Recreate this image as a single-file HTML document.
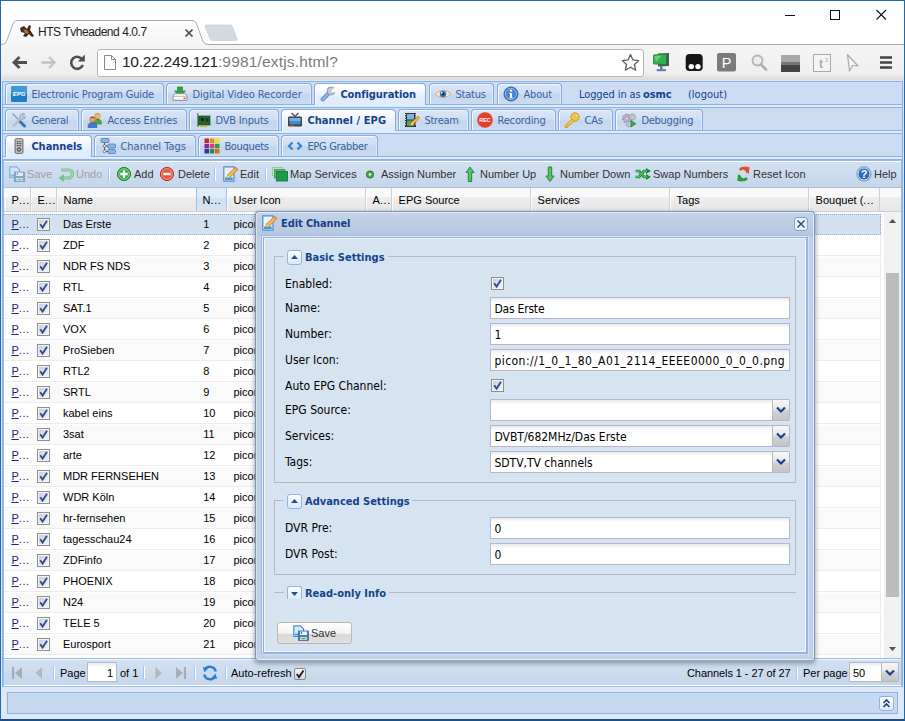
<!DOCTYPE html><html><head><meta charset="utf-8"><title>HTS Tvheadend 4.0.7</title><style>
*{box-sizing:border-box;margin:0;padding:0}
html,body{width:905px;height:721px;overflow:hidden;background:#fff}
body{position:relative;font-family:"Liberation Sans",sans-serif;font-size:11px;color:#000}
.a{position:absolute;white-space:nowrap}
.tah{font-family:"DejaVu Sans Condensed","Liberation Sans",sans-serif}
/* chrome */
#win{left:0;top:0;width:905px;height:721px;border:1px solid #1c6bb5;border-bottom:2px solid #16508c;z-index:50;pointer-events:none}
#tbar{left:1px;top:45px;width:903px;height:35px;background:linear-gradient(#f5f5f5 0,#efefef 28px,#e4e4e4 32px,#dcdcdc 35px)}
#url{left:97px;top:49px;width:547px;height:28px;background:#fff;border:1px solid #b4b4b4;border-radius:3px}
/* ext */
#vp{left:1px;top:80px;width:903px;height:639px;background:#dfe8f6}
.strip{left:3px;width:899px;height:23px;background:#cbdcf3;border-bottom:1px solid #8db2e3}
.spacer{left:3px;width:899px;height:3px;background:#deecfd;border-bottom:1px solid #8db2e3}
.tab{top:0;height:21px;border:1px solid #84aadf;border-bottom:0;border-radius:4px 4px 0 0;background:linear-gradient(#d9e6f7 0%,#cfdff3 45%,#c3d6ec 55%,#cbdcf1 100%);box-shadow:inset 1px 1px 0 #f4f8fd, inset -1px 0 0 #e0ebf9;color:#38629e;font-family:"DejaVu Sans Condensed","Liberation Sans",sans-serif;font-size:11px;line-height:13px}
.tab.act{height:22px;background:linear-gradient(#ffffff 0%,#f6f9fe 30%,#e4eefa 62%,#deecfd 100%);color:#15428b;font-weight:bold;box-shadow:inset 1px 1px 0 #fff}
.tab span{position:absolute;top:4px;left:25.4px}
.tab svg{position:absolute;left:5px;top:2px;width:16px;height:16px}
.tbtn{top:170px;font-size:11px;line-height:13px;color:#333}
.dis{color:#a0a0a0}
.sep{width:2px;height:14px;border-left:1px solid #98c8ff;border-right:1px solid #fff;top:167px}
.hd{top:188px;height:23px;border-right:1px solid #d0d0d0;border-left:1px solid #fbfbfb;font-size:11px;line-height:15px;padding:5px 3px 3px 5.6px;overflow:hidden}
.hd i{font-style:normal;letter-spacing:.6px}
.row{left:3px;width:877px;height:21px;border-top:1px solid #fff;border-bottom:1px solid #ededed;border-right:1px solid #ededed;font-size:11px;line-height:13px}
.row.alt{background:#fafafa}
.row.sel{background:#d4e1f0;border-top:1px dotted #8ea8dc;border-bottom:1px dotted #8ea8dc;border-right:1px dotted #8ea8dc}
.row span{position:absolute;top:3px}
.row .p{left:7.4px;color:#15257b}
.row .p u{text-decoration:underline}
.row .p i{font-style:normal;letter-spacing:.6px}
.row .n{left:59px}
.row .k{left:199.2px}
.row .u{left:229.5px}
.cb{position:absolute;width:13px;height:13px;border:1px solid #8e8f8f;background:linear-gradient(135deg,#c6cbd3,#e6e8ea 65%,#f6f6f6);box-shadow:inset 0 0 0 1px #f4f4f4}
.cb svg{position:absolute;left:0;top:0;width:11px;height:11px}
.row .cb{left:33px;top:3px}
.fld{height:22px;border:1px solid #b5b8c8;background:#fff linear-gradient(#e6e9ee 0,#fff 4px) no-repeat;background-size:100% 5px;font-family:"DejaVu Sans Condensed","Liberation Sans",sans-serif;font-size:12px;line-height:14px;padding:4px 0 0 3.4px;overflow:hidden}
.lbl{left:285px;font-family:"DejaVu Sans Condensed","Liberation Sans",sans-serif;font-size:12px;line-height:14px;color:#000}
.trig{width:17px;height:22px;border:1px solid #b5b8c8;border-left:0;background:linear-gradient(#f7f7f7 0%,#e9e9e9 45%,#d2d2d2 55%,#c4c4c4 100%);border-radius:0 2px 2px 0}
.trig svg{position:absolute;left:3px;top:6px;width:10px;height:8px}
.fs{left:274px;width:522px;border:1px solid #b5b8c8}
.leg{font-family:"DejaVu Sans Condensed","Liberation Sans",sans-serif;font-size:11px;font-weight:bold;color:#15428b;line-height:13px}
.tool{width:15px;height:15px;border:1px solid #90b3e4;border-radius:3px;background:linear-gradient(#fdfeff,#dce9f8)}
</style></head><body>
<div class="a" id="tbar"></div>
<svg class="a" style="left:0;top:17px" width="260" height="30" viewBox="0 0 260 30"><defs><linearGradient id="tg" x1="0" y1="0" x2="0" y2="1"><stop offset="0" stop-color="#fdfdfd"/><stop offset="1" stop-color="#f4f4f4"/></linearGradient></defs><path d="M1 27.5 C5 27.5 6 25.5 7.200 22.500 L12.500 8 C13.600 4.800 14.800 3.500 17.500 3.500 L192 3.500 C194.500 3.500 196 4.800 197 8 L202.300 22.500 C203.500 25.500 204.500 27.500 208.500 27.500 L208.500 30 L1 30 Z" fill="url(#tg)" stroke="#a8a8a8" stroke-width="1"/><rect x="0" y="28" width="260" height="3" fill="#f4f4f4"/><path d="M208.500 27.500 L260 27.500" stroke="#a8a8a8" stroke-width="1" fill="none"/><path d="M206.5 8 L230 8 C231.500 8 232 8.500 232.600 10 L237 21.500 C237.600 23 237 23.500 235.500 23.500 L212.500 23.500 C211 23.500 210.500 23 209.900 21.500 L205.300 10 C204.700 8.500 205 8 206.500 8 Z" fill="#d2d9df" stroke="#c3c9ce" stroke-width=".6"/></svg>
<div class="a" style="left:233px;top:44px;width:671px;height:1px;background:#a8a8a8"></div>
<svg class="a" style="left:19px;top:24px" width="16" height="16" viewBox="0 0 16 16"><path d="M1 4 L5 2 L8 5 L10 1 L12 2 L11 6 L15 12 L13 13 L10 10 L7 13 L4 12 L6 9 L2 8 Z" fill="#3a2a22"/><path d="M4 5 L8 6 L10 9 L7 10 Z" fill="#c8682a"/></svg>
<div class="a" style="left:38px;top:25px;font-size:12px;line-height:14px;color:#222;letter-spacing:-0.45px">HTS Tvheadend 4.0.7</div>
<svg class="a" style="left:184px;top:28px" width="10" height="10" viewBox="0 0 10 10"><path d="M1.500 1.500 L8.500 8.500 M8.500 1.500 L1.500 8.500" stroke="#4a4a4a" stroke-width="1.7"/></svg>
<svg class="a" style="left:780px;top:5px" width="120" height="22" viewBox="0 0 120 22"><path d="M5 10.500 H15" stroke="#111" stroke-width="1"/><rect x="50.500" y="5.500" width="9" height="9" fill="none" stroke="#111" stroke-width="1"/><path d="M96.500 5 L106 14.500 M106 5 L96.500 14.500" stroke="#111" stroke-width="1.100"/></svg>
<svg class="a" style="left:8px;top:50px" width="86" height="26" viewBox="0 0 86 26"><path d="M19 12.500 H6.500 M11.500 7 L6 12.500 L11.500 18" stroke="#505050" stroke-width="2.800" fill="none"/><path d="M33.500 12.500 H46 M41 7 L46.500 12.500 L41 18" stroke="#c2c2c2" stroke-width="2.400" fill="none"/><path d="M74.500 10 A6 6 0 1 0 74.800 15" stroke="#505050" stroke-width="2.600" fill="none"/><path d="M76.800 4.500 V11.500 H69.800 Z" fill="#505050"/></svg>
<div class="a" id="url"></div>
<svg class="a" style="left:104px;top:55px" width="12" height="15" viewBox="0 0 12 15"><path d="M0.500 0.500 H7.500 L11.500 4.500 V14.500 H0.500 Z" fill="#fff" stroke="#8a8a8a"/><path d="M7.500 0.500 V4.500 H11.500" fill="none" stroke="#8a8a8a"/></svg>
<div class="a" style="left:122px;top:53px;font-size:15.5px;line-height:18px;color:#222;letter-spacing:-0.25px">10.22.249.121<span style="color:#7a7a7a;letter-spacing:.17px">:9981/extjs.html?</span></div>
<svg class="a" style="left:621px;top:53px" width="19" height="19" viewBox="0 0 18 18"><path d="M9 1.500 L11.300 6.600 L16.800 7.200 L12.700 10.900 L13.900 16.300 L9 13.500 L4.100 16.300 L5.300 10.900 L1.200 7.200 L6.700 6.600 Z" fill="none" stroke="#5a5a5a" stroke-width="1.200" stroke-linejoin="round"/></svg>
<svg class="a" style="left:650px;top:51px" width="250" height="26" viewBox="0 0 250 26"><path d="M8 2.500 L19 2 L19 15 L8 15.500 Z" fill="#4a5a60"/><path d="M3.500 4 L16.500 3 L16.500 13.500 L3.500 13 Z" fill="#35b04a" stroke="#1d7a30" stroke-width=".7"/><path d="M4.500 5 L12 4.500 L6 11 Z" fill="#7fdc8a" opacity=".7"/><rect x="10" y="15" width="2.500" height="3.500" fill="#6a7a80"/><rect x="6.500" y="18" width="9.500" height="2.200" rx="1" fill="#5a86b8"/><rect x="35.700" y="3" width="17" height="17" rx="3.800" fill="#151515"/><circle cx="41.300" cy="15.600" r="2.700" fill="#fff"/><circle cx="48" cy="15.600" r="2.700" fill="#fff"/><rect x="67" y="2" width="19" height="18.500" rx="2" fill="#7b7b7b"/><text x="76.500" y="16.800" font-family="Liberation Sans,sans-serif" font-size="14.500" fill="#fff" text-anchor="middle">P</text><circle cx="107.500" cy="9.500" r="5" fill="#ededed" stroke="#b4b4b4" stroke-width="1.800"/><path d="M111 13.500 L116 18.500" stroke="#adadad" stroke-width="2.600" stroke-linecap="round"/><rect x="131" y="4" width="19" height="17" fill="#777"/><rect x="131" y="4" width="19" height="7" fill="#a8a8a8"/><rect x="131" y="14" width="19" height="7" fill="#444"/><rect x="163.500" y="3.500" width="17" height="17" fill="#f4f4f4" stroke="#aaa"/><text x="171" y="17" font-family="Liberation Sans,sans-serif" font-size="12" font-weight="bold" fill="#aaa" text-anchor="middle">t</text><text x="176.500" y="11" font-family="Liberation Sans,sans-serif" font-size="6" fill="#aaa" text-anchor="middle">3</text><path d="M197.500 3.500 L208 15 L202.500 14.500 L199.500 20 Z" fill="#f4f4f4" stroke="#aaa" stroke-width="1.200" stroke-linejoin="round"/><path d="M230 6.500 H242 M230 11.500 H242 M230 16.500 H242" stroke="#444" stroke-width="2.600"/></svg>
<div class="a" id="vp">
<div class="a" style="left:1px;top:1px;width:901px;height:606px;border:1px solid #8db2e3;background:#fff"></div>
<div class="a strip" style="top:2px;left:2px">
<div class="a tab" style="left:2px;top:1px;width:159px"><svg viewBox="0 0 16 16"><rect x="0" y="0" width="16" height="16" rx="1.500" fill="#1b7fc4"/><rect x="0" y="0" width="16" height="8" rx="1.500" fill="#3f9bd8"/><text x="8" y="10" font-family="Liberation Sans,sans-serif" font-size="6" font-weight="bold" font-style="italic" fill="#fff" text-anchor="middle">EPG</text></svg><span style="letter-spacing:-0.13px">Electronic Program Guide</span></div>
<div class="a tab" style="left:163px;top:1px;width:146px"><svg viewBox="0 0 16 16"><path d="M5.500 1 h5 v4 h3 l-5.500 5 l-5.500 -5 h3 z" fill="#2fa33a" stroke="#1c7a27" stroke-width=".6"/><path d="M1 10 L3 7.500 h10 L15 10 v4.500 H1 Z" fill="#eee" stroke="#888" stroke-width=".8"/><rect x="1.500" y="10.500" width="13" height="3.500" fill="#f8f8f8" stroke="#999" stroke-width=".5"/><rect x="11.500" y="11.700" width="2" height="1.300" fill="#d33"/></svg><span style="letter-spacing:-0.05px">Digital Video Recorder</span></div>
<div class="a tab act" style="left:311px;top:1px;width:112px"><svg viewBox="0 0 16 16"><path d="M2.800 13.200 L9 7" stroke="#5f8cc8" stroke-width="4.200" stroke-linecap="round"/><path d="M2.800 13.200 L9 7" stroke="#8fb3e2" stroke-width="2.400" stroke-linecap="round"/><circle cx="11" cy="5" r="4" fill="#c3c9d1" stroke="#8b939e" stroke-width=".9"/><path d="M10.800 5.200 L16 0 L16 5.500 L13.500 6.500 Z" fill="#f6f9fd"/><path d="M10.800 5.200 L13.200 2.600 L13.700 4.800 Z" fill="#eef4fb"/></svg><span style="letter-spacing:-0.07px">Configuration</span></div>
<div class="a tab" style="left:426px;top:1px;width:65px"><svg viewBox="0 0 16 16"><path d="M0.500 8 C3 3.500 13 3.500 15.500 8 C13 12.500 3 12.500 0.500 8 Z" fill="#fbe9d8" stroke="#d9a47a" stroke-width="1"/><circle cx="8" cy="8" r="3.300" fill="#3c78c0"/><circle cx="8" cy="8" r="1.400" fill="#123"/><circle cx="6.800" cy="6.800" r=".9" fill="#fff"/></svg><span style="letter-spacing:-0.19px">Status</span></div>
<div class="a tab" style="left:494px;top:1px;width:65px"><svg viewBox="0 0 16 16"><circle cx="8" cy="8" r="7" fill="#4a86c8" stroke="#2b62a2" stroke-width="1"/><circle cx="8" cy="8" r="5.600" fill="none" stroke="#9cc2ea" stroke-width=".8"/><rect x="7" y="7" width="2" height="5" fill="#fff"/><rect x="6.300" y="7" width="2" height="1" fill="#fff"/><rect x="6.300" y="11.300" width="3.400" height="1" fill="#fff"/><circle cx="8" cy="4.600" r="1.200" fill="#fff"/></svg><span style="letter-spacing:-0.13px">About</span></div>
<div class="a tah" style="left:576px;top:6px;font-size:11px;line-height:13px;color:#15428b;letter-spacing:-.1px">Logged in as</div>
<div class="a tah" style="left:640px;top:6px;font-size:11px;line-height:13px;color:#15428b;font-weight:bold;letter-spacing:-.05px">osmc</div>
<div class="a tah" style="left:685px;top:6px;font-size:11px;line-height:13px;color:#15428b">(logout)</div>
</div>
<div class="a spacer" style="top:25px;left:2px"></div>
<div class="a strip" style="top:28px;left:2px">
<div class="a tab" style="left:2px;top:1px;width:74px"><svg viewBox="0 0 16 16"><path d="M2 2 L13.500 14" stroke="#9aa3ad" stroke-width="1.600" stroke-linecap="round"/><path d="M8.500 9 L13.500 14" stroke="#2f78c4" stroke-width="3" stroke-linecap="round"/><path d="M2.500 14 L10 6" stroke="#b8bec6" stroke-width="2.200" stroke-linecap="round"/><path d="M9.500 6.500 a3 3 0 1 1 4.500 -4 l-2 .3 l-.5 1.700 l1.700 .8 l1.300 -.8 a3 3 0 0 1 -5 2 z" fill="#c9ced6" stroke="#8d949d" stroke-width=".7"/></svg><span style="letter-spacing:-0.32px">General</span></div>
<div class="a tab" style="left:78px;top:1px;width:106px"><svg viewBox="0 0 16 16"><circle cx="10.500" cy="4" r="2.800" fill="#f0b878" stroke="#c98a4a" stroke-width=".6"/><path d="M6.500 12 c0 -4 2 -5 4 -5 s4 1 4 5 z" fill="#4aa84a" stroke="#2c7d2c" stroke-width=".6"/><circle cx="5.500" cy="7.500" r="2.800" fill="#e8a070" stroke="#b8703c" stroke-width=".6"/><path d="M1 15.500 c0 -4 2 -5 4.500 -5 s4.500 1 4.500 5 z" fill="#3d7ec8" stroke="#275a9a" stroke-width=".6"/><path d="M2.800 6.500 c.5 -2.500 5 -2.500 5.500 0 c-1.500 -1 -4 -1 -5.500 0z" fill="#8a4a2a"/><path d="M7.800 3 c.5 -2.500 5 -2.500 5.500 0 c-1.500 -1 -4 -1 -5.500 0z" fill="#d8a040"/></svg><span style="letter-spacing:-0.12px">Access Entries</span></div>
<div class="a tab" style="left:186px;top:1px;width:90px"><svg viewBox="0 0 16 16"><rect x="2" y="1" width="1.500" height="14" fill="#888"/><rect x="3.500" y="4" width="11.500" height="9" fill="#1f6b2c" stroke="#0f4a1a" stroke-width=".7"/><rect x="6" y="6" width="3" height="3" fill="#222"/><rect x="10.500" y="6" width="3" height="4" fill="#333"/><rect x="5" y="13" width="7" height="1.600" fill="#c9a227"/></svg><span style="letter-spacing:-0.17px">DVB Inputs</span></div>
<div class="a tab act" style="left:278px;top:1px;width:115px"><svg viewBox="0 0 16 16"><path d="M4.500 1 L8 4.500 L11.500 1" stroke="#444" stroke-width="1.200" fill="none"/><rect x="1" y="4.500" width="14" height="10" rx="1.200" fill="#444"/><rect x="2.500" y="6" width="11" height="6.300" fill="#3c8fd0"/><rect x="2.500" y="6" width="11" height="3" fill="#6db3e6"/><rect x="3" y="13" width="4" height="1" fill="#d33"/></svg><span style="letter-spacing:0.07px">Channel / EPG</span></div>
<div class="a tab" style="left:395px;top:1px;width:71px"><svg viewBox="0 0 16 16"><rect x="1" y="1" width="11" height="14" fill="#333"/><rect x="3" y="2" width="7" height="5.500" fill="#7fb3e0"/><rect x="3" y="8.500" width="7" height="5.500" fill="#5da34e"/><path d="M1.500 2 v12 M11.500 2 v12" stroke="#ddd" stroke-width="1" stroke-dasharray="1.200 1.200"/><path d="M6.500 13.500 L8 10 L14 4 L15.800 5.800 L9.800 12 Z" fill="#f2b33a" stroke="#a8721a" stroke-width=".6"/><path d="M6.500 13.500 L8 10 L9.800 12 Z" fill="#f6d9a8"/></svg><span style="letter-spacing:-0.25px">Stream</span></div>
<div class="a tab" style="left:468px;top:1px;width:85px"><svg viewBox="0 0 16 16"><circle cx="8" cy="8" r="7.800" fill="#e2402a"/><text x="8" y="10" font-family="Liberation Sans,sans-serif" font-size="5.500" font-weight="bold" fill="#fff" text-anchor="middle">REC</text></svg><span style="letter-spacing:-0.14px">Recording</span></div>
<div class="a tab" style="left:555px;top:1px;width:55px"><svg viewBox="0 0 16 16"><circle cx="11" cy="5" r="4.200" fill="#f5c542" stroke="#c8922a" stroke-width=".9"/><circle cx="12.300" cy="3.800" r="1.200" fill="#fff8dc" stroke="#c8922a" stroke-width=".5"/><path d="M8 7 L1 13.500 L1 15.500 L3.500 15.500 L3.500 14 L5 14 L5 12.500 L6.500 12.500 L9.800 9 Z" fill="#f5c542" stroke="#c8922a" stroke-width=".8"/></svg><span style="letter-spacing:-0.11px">CAs</span></div>
<div class="a tab" style="left:612px;top:1px;width:88px"><svg viewBox="0 0 16 16"><circle cx="6" cy="6.500" r="4.300" fill="#b9b4c8" stroke="#7f7a92" stroke-width="1" stroke-dasharray="1.800 1.100"/><circle cx="6" cy="6.500" r="1.600" fill="#ecebf2" stroke="#7f7a92" stroke-width=".6"/><circle cx="11.500" cy="5" r="3" fill="#c6c2d3" stroke="#7f7a92" stroke-width=".9" stroke-dasharray="1.400 .9"/><circle cx="8" cy="12" r="2.800" fill="#c6c2d3" stroke="#7f7a92" stroke-width=".9" stroke-dasharray="1.400 .9"/><path d="M10 8.500 L15 11.800 L10 15 Z" fill="#39a845" stroke="#1f7a2a" stroke-width=".6"/></svg><span style="letter-spacing:-0.26px">Debugging</span></div>
</div>
<div class="a spacer" style="top:51px;left:2px"></div>
<div class="a strip" style="top:54px;left:2px">
<div class="a tab act" style="left:2px;top:1px;width:87px"><svg viewBox="0 0 16 16"><rect x="4" y="0.500" width="8" height="15" rx="1.500" fill="#a9a9a9" stroke="#6e6e6e" stroke-width=".9"/><rect x="5" y="1.500" width="6" height="13" rx="1" fill="#c9c9c9"/><circle cx="8" cy="11.500" r="2.100" fill="#666" stroke="#444" stroke-width=".5"/><circle cx="8" cy="11.500" r=".8" fill="#ddd"/><rect x="5.800" y="3" width="1.200" height="1.200" fill="#444"/><rect x="7.500" y="3" width="1.200" height="1.200" fill="#444"/><rect x="9.200" y="3" width="1.200" height="1.200" fill="#c33"/><rect x="5.800" y="5" width="1.200" height="1.200" fill="#444"/><rect x="7.500" y="5" width="1.200" height="1.200" fill="#444"/><rect x="9.200" y="5" width="1.200" height="1.200" fill="#444"/><rect x="5.800" y="7" width="1.200" height="1.200" fill="#444"/><rect x="7.500" y="7" width="1.200" height="1.200" fill="#444"/><rect x="9.200" y="7" width="1.200" height="1.200" fill="#444"/></svg><span style="letter-spacing:-0.03px">Channels</span></div>
<div class="a tab" style="left:91px;top:1px;width:102px"><svg viewBox="0 0 16 16"><path d="M4.500 4 V13.500 H8 M4.500 8 H8" stroke="#555" stroke-width="1" fill="none"/><rect x="1" y="0.500" width="8" height="4" rx="1" fill="#8fb4e6" stroke="#4a78b8" stroke-width=".8"/><rect x="8" y="6" width="7.500" height="4" rx="1" fill="#8fb4e6" stroke="#4a78b8" stroke-width=".8"/><rect x="8" y="11.500" width="7.500" height="4" rx="1" fill="#8fb4e6" stroke="#4a78b8" stroke-width=".8"/><circle cx="4.500" cy="8" r="1.300" fill="#fff" stroke="#555" stroke-width=".7"/><circle cx="4.500" cy="13.500" r="1.300" fill="#fff" stroke="#555" stroke-width=".7"/></svg><span style="letter-spacing:0.01px">Channel Tags</span></div>
<div class="a tab" style="left:195px;top:1px;width:81px"><svg viewBox="0 0 16 16"><rect x="0.500" y="0.500" width="4.500" height="4.500" fill="#c8262c"/><rect x="5.800" y="0.500" width="4.500" height="4.500" fill="#e98a1c"/><rect x="11" y="0.500" width="4.500" height="4.500" fill="#f2e21c"/><rect x="0.500" y="5.800" width="4.500" height="4.500" fill="#8a2a8c"/><rect x="5.800" y="5.800" width="4.500" height="4.500" fill="#d83a8c"/><rect x="11" y="5.800" width="4.500" height="4.500" fill="#3a9a3a"/><rect x="0.500" y="11" width="4.500" height="4.500" fill="#2a3a9c"/><rect x="5.800" y="11" width="4.500" height="4.500" fill="#2a8a4a"/><rect x="11" y="11" width="4.500" height="4.500" fill="#e06a1c"/></svg><span style="letter-spacing:-0.33px">Bouquets</span></div>
<div class="a tab" style="left:278px;top:1px;width:97px"><svg viewBox="0 0 16 16"><path d="M5.500 4.500 L2 8 L5.500 11.500 M10.500 4.500 L14 8 L10.500 11.500" stroke="#2f86d0" stroke-width="2.200" fill="none"/></svg><span style="letter-spacing:-0.32px">EPG Grabber</span></div>
</div>
<div class="a spacer" style="top:77px;left:2px"></div>
<div class="a" style="left:2px;top:80px;width:899px;height:527px;border:1px solid #99bbe8;background:#fff"></div>
<div class="a" style="left:3px;top:81px;width:897px;height:27px;background:linear-gradient(#d3e1f1,#c5d6eb);border-top:1px solid #fff;border-bottom:1px solid #a9bfd3"></div>
<div class="a" style="left:8px;top:86px;width:16px;height:16px;opacity:.55;"><svg viewBox="0 0 16 16"><path d="M0.800 0.800 H7.500 L10.500 3.800 V11.500 H0.800 Z" fill="#dbe9f7" stroke="#4d8ccf" stroke-width="1.200"/><rect x="1.800" y="8.500" width="5" height="2" fill="#36a3e0"/><rect x="5.500" y="6" width="10" height="9.500" fill="#4a7cc0" stroke="#3a68a8" stroke-width=".8"/><rect x="7" y="6.500" width="7" height="3.500" fill="#f4f7fb"/><rect x="7.300" y="12" width="6.400" height="3" fill="#e8f2da"/><rect x="8.500" y="12.800" width="4" height="1.600" fill="#4fb04a"/><rect x="7.800" y="7.200" width="1.200" height="1.500" fill="#2a4a88"/></svg></div>
<div class="a tbtn dis" style="left:26px;top:88px">Save</div>
<div class="a" style="left:57px;top:86px;width:16px;height:16px;opacity:.55;"><svg viewBox="0 0 16 16"><path d="M3 4 H10.500 a4 4 0 0 1 0 8 H4.500" stroke="#3aa84a" stroke-width="3.200" fill="none"/><path d="M0.500 12 L6 8 V16 Z" fill="#3aa84a"/><path d="M3 4 H10.500 a4 4 0 0 1 0 8 H6" stroke="#8fd896" stroke-width="1.200" fill="none"/></svg></div>
<div class="a tbtn dis" style="left:75px;top:88px">Undo</div>
<div class="a" style="left:115px;top:86px;width:16px;height:16px;"><svg viewBox="0 0 16 16"><circle cx="8" cy="8" r="6.600" fill="#3aa94a" stroke="#1f7f30" stroke-width="1"/><circle cx="8" cy="8" r="5.300" fill="none" stroke="#8fd79a" stroke-width=".9"/><path d="M8 4.300 V11.700 M4.300 8 H11.700" stroke="#fff" stroke-width="2.300"/></svg></div>
<div class="a tbtn" style="left:133px;top:88px">Add</div>
<div class="a" style="left:158px;top:86px;width:16px;height:16px;"><svg viewBox="0 0 16 16"><circle cx="8" cy="8" r="6.600" fill="#e5543f" stroke="#b93421" stroke-width="1"/><circle cx="8" cy="8" r="5.300" fill="none" stroke="#f4a294" stroke-width=".9"/><path d="M4.300 8 H11.700" stroke="#fff" stroke-width="2.500"/></svg></div>
<div class="a tbtn" style="left:177px;top:88px">Delete</div>
<div class="a" style="left:222px;top:86px;width:16px;height:16px;"><svg viewBox="0 0 16 16"><path d="M0.800 0.800 H11 V15.200 H0.800 Z" fill="#eaf2fb" stroke="#4d8ccf" stroke-width="1.200"/><rect x="2" y="11.500" width="7.800" height="2.500" fill="#36a3e0"/><path d="M3.500 12.500 L5 8.500 L12.500 1 L15 3.500 L7.500 11 Z" fill="#f4b94a" stroke="#b8782a" stroke-width=".8"/><path d="M3.500 12.500 L5 8.500 L7.500 11 Z" fill="#f7e2c0" stroke="#b8782a" stroke-width=".5"/><path d="M11.500 2 L14 4.500" stroke="#e58a8a" stroke-width="1.600"/></svg></div>
<div class="a tbtn" style="left:239px;top:88px">Edit</div>
<div class="a" style="left:271px;top:86px;width:16px;height:16px;"><svg viewBox="0 0 16 16"><rect x="0.500" y="1.500" width="10" height="8" fill="#bfe3c6" stroke="#8cc79a" stroke-width=".8"/><rect x="2.500" y="3.500" width="10.500" height="8.500" fill="#5cb870" stroke="#3a9a52" stroke-width=".8"/><rect x="4.500" y="5.500" width="11" height="9.500" fill="#1f9a48" stroke="#157a36" stroke-width=".9"/></svg></div>
<div class="a tbtn" style="left:289px;top:88px">Map Services</div>
<div class="a" style="left:361px;top:86px;width:16px;height:16px;"><svg viewBox="0 0 16 16"><circle cx="8" cy="8.500" r="3.600" fill="#4aa84a" stroke="#2a7a2a" stroke-width="1"/><circle cx="8" cy="8.500" r="1.300" fill="#e8f8e8"/></svg></div>
<div class="a tbtn" style="left:380px;top:88px">Assign Number</div>
<div class="a" style="left:461px;top:86px;width:16px;height:16px;"><svg viewBox="0 0 16 16"><path d="M8 1 L12 6.500 H9.700 V15.500 H6.300 V6.500 H4 Z" fill="#5cc06a" stroke="#1f8a34" stroke-width="1"/></svg></div>
<div class="a tbtn" style="left:479px;top:88px">Number Up</div>
<div class="a" style="left:541px;top:86px;width:16px;height:16px;"><svg viewBox="0 0 16 16"><path d="M8 15.500 L12 10 H9.700 V1 H6.300 V10 H4 Z" fill="#5cc06a" stroke="#1f8a34" stroke-width="1"/></svg></div>
<div class="a tbtn" style="left:559px;top:88px">Number Down</div>
<div class="a" style="left:634px;top:86px;width:16px;height:16px;"><svg viewBox="0 0 16 16"><g transform="translate(0,1.2) scale(1,.85)"><path d="M0.500 4.500 H4 L9 11.500 H12" stroke="#178a34" stroke-width="3" fill="none"/><path d="M0.500 11.500 H4 L9 4.500 H12" stroke="#178a34" stroke-width="3" fill="none"/><path d="M11 1 L16 4.500 L11 8 Z M11 8 L16 11.500 L11 15 Z" fill="#178a34"/><path d="M0.500 4.500 H4 L9 11.500 H12 M0.500 11.500 H4 L9 4.500 H12" stroke="#7fd08f" stroke-width="1" fill="none"/></g></svg></div>
<div class="a tbtn" style="left:652px;top:88px">Swap Numbers</div>
<div class="a" style="left:735px;top:86px;width:16px;height:16px;"><svg viewBox="0 0 16 16"><g transform="translate(1,0) scale(.8,1)"><path d="M13.500 7 A6 6.200 0 0 0 3.500 4" stroke="#e2502a" stroke-width="3" fill="none"/><path d="M9.500 0.300 L15.800 1.200 L14.500 8.200 Z" fill="#e2502a"/><path d="M2.500 9 A6 6.200 0 0 0 12.500 12" stroke="#2a9a3a" stroke-width="3" fill="none"/><path d="M6.500 15.700 L0.200 14.800 L1.500 7.800 Z" fill="#2a9a3a"/></g></svg></div>
<div class="a tbtn" style="left:752px;top:88px">Reset Icon</div>
<div class="a" style="left:855px;top:86px;width:16px;height:16px;"><svg viewBox="0 0 16 16"><circle cx="8" cy="8" r="7.300" fill="#3f7fc8" stroke="#9db8d8" stroke-width="1.200"/><circle cx="8" cy="8" r="6" fill="#2f6ab8" stroke="#e8f0fa" stroke-width=".9"/><text x="8" y="12" font-family="Liberation Sans,sans-serif" font-size="11" font-weight="bold" fill="#fff" text-anchor="middle">?</text></svg></div>
<div class="a tbtn" style="left:873px;top:88px">Help</div>
<div class="a sep" style="left:107px;top:87px"></div>
<div class="a sep" style="left:213px;top:87px"></div>
<div class="a sep" style="left:264px;top:87px"></div>
<div class="a" style="left:3px;top:108px;width:897px;height:24px;background:linear-gradient(#f9f9f9 0%,#f9f9f9 38%,#ededed 42%,#e5e6e8 100%);border-bottom:1px solid #d0d0d0"></div>
<div class="a hd" style="left:4px;top:108px;width:26px;">P<i>...</i></div>
<div class="a hd" style="left:30px;top:108px;width:26px;">E<i>...</i></div>
<div class="a hd" style="left:56px;top:108px;width:140px;">Name</div>
<div class="a hd" style="left:195px;top:108px;width:31px;background:linear-gradient(#e1ecf8 0%,#dfebf8 40%,#d0e1f3 46%,#d5e4f4 100%);border-left:1px solid #a3c4ea;border-right:1px solid #a3c4ea;">N<i>...</i></div>
<div class="a hd" style="left:226px;top:108px;width:139px;">User Icon</div>
<div class="a hd" style="left:365px;top:108px;width:26px;">A<i>...</i></div>
<div class="a hd" style="left:391px;top:108px;width:139px;">EPG Source</div>
<div class="a hd" style="left:530px;top:108px;width:139px;">Services</div>
<div class="a hd" style="left:669px;top:108px;width:139px;">Tags</div>
<div class="a hd" style="left:808px;top:108px;width:71px;">Bouquet (<i>...</i></div>
<div class="a row sel" style="top:134px"><span class="p"><u>P</u><i>...</i></span><span class="cb"><svg viewBox="0 0 11 11"><path d="M2.200 5.200 L4.600 8.600 L9 1.800" stroke="#2f4a9c" stroke-width="1.800" fill="none"/></svg></span><span class="n">Das Erste</span><span class="k">1</span><span class="u">picon://1_0_1</span></div>
<div class="a row" style="top:155px"><span class="p"><u>P</u><i>...</i></span><span class="cb"><svg viewBox="0 0 11 11"><path d="M2.200 5.200 L4.600 8.600 L9 1.800" stroke="#2f4a9c" stroke-width="1.800" fill="none"/></svg></span><span class="n">ZDF</span><span class="k">2</span><span class="u">picon://1_0_1</span></div>
<div class="a row alt" style="top:176px"><span class="p"><u>P</u><i>...</i></span><span class="cb"><svg viewBox="0 0 11 11"><path d="M2.200 5.200 L4.600 8.600 L9 1.800" stroke="#2f4a9c" stroke-width="1.800" fill="none"/></svg></span><span class="n">NDR FS NDS</span><span class="k">3</span><span class="u">picon://1_0_1</span></div>
<div class="a row" style="top:197px"><span class="p"><u>P</u><i>...</i></span><span class="cb"><svg viewBox="0 0 11 11"><path d="M2.200 5.200 L4.600 8.600 L9 1.800" stroke="#2f4a9c" stroke-width="1.800" fill="none"/></svg></span><span class="n">RTL</span><span class="k">4</span><span class="u">picon://1_0_1</span></div>
<div class="a row alt" style="top:218px"><span class="p"><u>P</u><i>...</i></span><span class="cb"><svg viewBox="0 0 11 11"><path d="M2.200 5.200 L4.600 8.600 L9 1.800" stroke="#2f4a9c" stroke-width="1.800" fill="none"/></svg></span><span class="n">SAT.1</span><span class="k">5</span><span class="u">picon://1_0_1</span></div>
<div class="a row" style="top:239px"><span class="p"><u>P</u><i>...</i></span><span class="cb"><svg viewBox="0 0 11 11"><path d="M2.200 5.200 L4.600 8.600 L9 1.800" stroke="#2f4a9c" stroke-width="1.800" fill="none"/></svg></span><span class="n">VOX</span><span class="k">6</span><span class="u">picon://1_0_1</span></div>
<div class="a row alt" style="top:260px"><span class="p"><u>P</u><i>...</i></span><span class="cb"><svg viewBox="0 0 11 11"><path d="M2.200 5.200 L4.600 8.600 L9 1.800" stroke="#2f4a9c" stroke-width="1.800" fill="none"/></svg></span><span class="n">ProSieben</span><span class="k">7</span><span class="u">picon://1_0_1</span></div>
<div class="a row" style="top:281px"><span class="p"><u>P</u><i>...</i></span><span class="cb"><svg viewBox="0 0 11 11"><path d="M2.200 5.200 L4.600 8.600 L9 1.800" stroke="#2f4a9c" stroke-width="1.800" fill="none"/></svg></span><span class="n">RTL2</span><span class="k">8</span><span class="u">picon://1_0_1</span></div>
<div class="a row alt" style="top:302px"><span class="p"><u>P</u><i>...</i></span><span class="cb"><svg viewBox="0 0 11 11"><path d="M2.200 5.200 L4.600 8.600 L9 1.800" stroke="#2f4a9c" stroke-width="1.800" fill="none"/></svg></span><span class="n">SRTL</span><span class="k">9</span><span class="u">picon://1_0_1</span></div>
<div class="a row" style="top:323px"><span class="p"><u>P</u><i>...</i></span><span class="cb"><svg viewBox="0 0 11 11"><path d="M2.200 5.200 L4.600 8.600 L9 1.800" stroke="#2f4a9c" stroke-width="1.800" fill="none"/></svg></span><span class="n">kabel eins</span><span class="k">10</span><span class="u">picon://1_0_1</span></div>
<div class="a row alt" style="top:344px"><span class="p"><u>P</u><i>...</i></span><span class="cb"><svg viewBox="0 0 11 11"><path d="M2.200 5.200 L4.600 8.600 L9 1.800" stroke="#2f4a9c" stroke-width="1.800" fill="none"/></svg></span><span class="n">3sat</span><span class="k">11</span><span class="u">picon://1_0_1</span></div>
<div class="a row" style="top:365px"><span class="p"><u>P</u><i>...</i></span><span class="cb"><svg viewBox="0 0 11 11"><path d="M2.200 5.200 L4.600 8.600 L9 1.800" stroke="#2f4a9c" stroke-width="1.800" fill="none"/></svg></span><span class="n">arte</span><span class="k">12</span><span class="u">picon://1_0_1</span></div>
<div class="a row alt" style="top:386px"><span class="p"><u>P</u><i>...</i></span><span class="cb"><svg viewBox="0 0 11 11"><path d="M2.200 5.200 L4.600 8.600 L9 1.800" stroke="#2f4a9c" stroke-width="1.800" fill="none"/></svg></span><span class="n">MDR FERNSEHEN</span><span class="k">13</span><span class="u">picon://1_0_1</span></div>
<div class="a row" style="top:407px"><span class="p"><u>P</u><i>...</i></span><span class="cb"><svg viewBox="0 0 11 11"><path d="M2.200 5.200 L4.600 8.600 L9 1.800" stroke="#2f4a9c" stroke-width="1.800" fill="none"/></svg></span><span class="n">WDR Köln</span><span class="k">14</span><span class="u">picon://1_0_1</span></div>
<div class="a row alt" style="top:428px"><span class="p"><u>P</u><i>...</i></span><span class="cb"><svg viewBox="0 0 11 11"><path d="M2.200 5.200 L4.600 8.600 L9 1.800" stroke="#2f4a9c" stroke-width="1.800" fill="none"/></svg></span><span class="n">hr-fernsehen</span><span class="k">15</span><span class="u">picon://1_0_1</span></div>
<div class="a row" style="top:449px"><span class="p"><u>P</u><i>...</i></span><span class="cb"><svg viewBox="0 0 11 11"><path d="M2.200 5.200 L4.600 8.600 L9 1.800" stroke="#2f4a9c" stroke-width="1.800" fill="none"/></svg></span><span class="n">tagesschau24</span><span class="k">16</span><span class="u">picon://1_0_1</span></div>
<div class="a row alt" style="top:470px"><span class="p"><u>P</u><i>...</i></span><span class="cb"><svg viewBox="0 0 11 11"><path d="M2.200 5.200 L4.600 8.600 L9 1.800" stroke="#2f4a9c" stroke-width="1.800" fill="none"/></svg></span><span class="n">ZDFinfo</span><span class="k">17</span><span class="u">picon://1_0_1</span></div>
<div class="a row" style="top:491px"><span class="p"><u>P</u><i>...</i></span><span class="cb"><svg viewBox="0 0 11 11"><path d="M2.200 5.200 L4.600 8.600 L9 1.800" stroke="#2f4a9c" stroke-width="1.800" fill="none"/></svg></span><span class="n">PHOENIX</span><span class="k">18</span><span class="u">picon://1_0_1</span></div>
<div class="a row alt" style="top:512px"><span class="p"><u>P</u><i>...</i></span><span class="cb"><svg viewBox="0 0 11 11"><path d="M2.200 5.200 L4.600 8.600 L9 1.800" stroke="#2f4a9c" stroke-width="1.800" fill="none"/></svg></span><span class="n">N24</span><span class="k">19</span><span class="u">picon://1_0_1</span></div>
<div class="a row" style="top:533px"><span class="p"><u>P</u><i>...</i></span><span class="cb"><svg viewBox="0 0 11 11"><path d="M2.200 5.200 L4.600 8.600 L9 1.800" stroke="#2f4a9c" stroke-width="1.800" fill="none"/></svg></span><span class="n">TELE 5</span><span class="k">20</span><span class="u">picon://1_0_1</span></div>
<div class="a row alt" style="top:554px"><span class="p"><u>P</u><i>...</i></span><span class="cb"><svg viewBox="0 0 11 11"><path d="M2.200 5.200 L4.600 8.600 L9 1.800" stroke="#2f4a9c" stroke-width="1.800" fill="none"/></svg></span><span class="n">Eurosport</span><span class="k">21</span><span class="u">picon://1_0_1</span></div>
<div class="a row" style="top:575px;height:3px;border-bottom:0"></div>
<div class="a" style="left:883px;top:132px;width:17px;height:446px;background:#f1f1f1"></div>
<div class="a" style="left:885px;top:193px;width:13px;height:324px;background:#bcbcbc"></div>
<svg class="a" style="left:888px;top:139px" width="7" height="4" viewBox="0 0 7 4"><path d="M0 4 L3.500 0 L7 4 Z" fill="#505050"/></svg>
<svg class="a" style="left:888px;top:567px" width="7" height="4" viewBox="0 0 7 4"><path d="M0 0 L3.500 4 L7 0 Z" fill="#505050"/></svg>
<div class="a" style="left:3px;top:578px;width:897px;height:27px;background:linear-gradient(#d3e1f1,#c5d6eb);border-top:1px solid #99bbe8;box-shadow:inset 0 1px 0 #eef4fb"></div>
<svg class="a" style="left:10px;top:586px" width="200" height="14" viewBox="0 0 200 14"><rect x="1" y="1" width="2.200" height="12" fill="#a9adb3"/><path d="M11 1 V13 L4 7 Z" fill="#a9adb3"/><path d="M31 1 V13 L24.500 7 Z" fill="#b4b8be"/><path d="M144.500 1 V13 L151 7 Z" fill="#b4b8be"/><path d="M165 1 V13 L172 7 Z" fill="#a9adb3"/><rect x="172.800" y="1" width="2.200" height="12" fill="#a9adb3"/></svg>
<div class="a sep" style="left:52px;top:586px;height:13px"></div>
<div class="a sep" style="left:142px;top:586px;height:13px"></div>
<div class="a sep" style="left:193px;top:586px;height:13px"></div>
<div class="a sep" style="left:224px;top:586px;height:13px"></div>
<div class="a" style="left:59px;top:587px;font-size:11px;line-height:13px">Page</div>
<div class="a" style="left:86px;top:582px;width:30px;height:20px;border:1px solid #b5b8c8;background:#fff linear-gradient(#e6e9ee,#fff 4px);font-size:11px;line-height:13px;text-align:right;padding:4px 3px 0 0">1</div>
<div class="a" style="left:119px;top:587px;font-size:11px;line-height:13px">of 1</div>
<div class="a" style="left:201px;top:585px;width:16px;height:16px"><svg viewBox="0 0 16 16"><path d="M13.800 6.500 A6 6 0 0 0 3 4.300" stroke="#2f7fd0" stroke-width="2.400" fill="none"/><path d="M0.800 2 L6.200 3.300 L2.500 7.500 Z" fill="#2f7fd0"/><path d="M2.200 9.500 A6 6 0 0 0 13 11.700" stroke="#2f7fd0" stroke-width="2.400" fill="none"/><path d="M15.200 14 L9.800 12.700 L13.500 8.500 Z" fill="#2f7fd0"/></svg></div>
<div class="a" style="left:230px;top:587px;font-size:11px;line-height:13px">Auto-refresh</div>
<div class="a" style="left:293px;top:588px;width:12px;height:12px;border:1px solid #8a8a8a;border-radius:2px;background:linear-gradient(#f4f4f4,#d8d8d8)"><svg viewBox="0 0 10 10" style="position:absolute;left:0;top:0;width:10px;height:10px"><path d="M1.800 5 L4 8 L8.500 1.500" stroke="#222" stroke-width="1.900" fill="none"/></svg></div>
<div class="a" style="left:686px;top:587px;font-size:11px;line-height:13px;letter-spacing:-.08px">Channels 1 - 27 of 27</div>
<div class="a sep" style="left:795px;top:586px;height:13px"></div>
<div class="a" style="left:802px;top:587px;font-size:11px;line-height:13px">Per page</div>
<div class="a" style="left:848px;top:582px;width:33px;height:20px;border:1px solid #b5b8c8;background:#fff linear-gradient(#e6e9ee,#fff 4px);font-size:11px;line-height:13px;padding:4px 0 0 3px">50</div>
<div class="a trig" style="left:881px;top:582px;height:20px"><svg style="top:6px" viewBox="0 0 10 8"><path d="M1 1.500 L5 5.500 L9 1.500" stroke="#15428b" stroke-width="2.200" fill="none"/></svg></div>
<div class="a" style="left:6px;top:612px;width:891px;height:22px;border:1px solid #8db2e3;background:#c6d9ee"></div>
<div class="a tool" style="left:878px;top:616px;width:15px;height:15px"><svg viewBox="0 0 13 13" style="position:absolute;left:0;top:0;width:13px;height:13px"><path d="M3.500 6 L6.500 3 L9.500 6 M3.500 10 L6.500 7 L9.500 10" stroke="#15428b" stroke-width="1.600" fill="none"/></svg></div>
</div>
<div class="a" id="dlg" style="left:255px;top:211px;width:560px;height:450px;border:1px solid #7596c6;border-bottom-color:#86a5cf;border-radius:4px;background:linear-gradient(#c5d4e7 0,#b6c8df 23px,#c2d2e6 26px,#c2d2e6 100%);box-shadow:inset 0 1px 0 #e3ecf6, inset 1px 0 0 #d6e2f0, inset -1px 0 0 #e6eef8, inset 0 -1px 0 #e6eef8, 0 2px 4px 1px rgba(0,0,0,.30)">
<div class="a" style="left:6px;top:3px;width:16px;height:16px"><svg viewBox="0 0 16 16"><path d="M0.800 0.800 H11 V15.200 H0.800 Z" fill="#eaf2fb" stroke="#4d8ccf" stroke-width="1.200"/><rect x="2" y="11.500" width="7.800" height="2.500" fill="#36a3e0"/><path d="M3.500 12.500 L5 8.500 L12.500 1 L15 3.500 L7.500 11 Z" fill="#f4b94a" stroke="#b8782a" stroke-width=".8"/><path d="M3.500 12.500 L5 8.500 L7.500 11 Z" fill="#f7e2c0" stroke="#b8782a" stroke-width=".5"/><path d="M11.500 2 L14 4.500" stroke="#e58a8a" stroke-width="1.600"/></svg></div>
<div class="a tah" style="left:25px;top:5px;font-size:11px;font-weight:bold;line-height:13px;color:#15428b;letter-spacing:-.1px">Edit Channel</div>
<div class="a tool" style="left:538px;top:5px;width:14px;height:14px;border-color:#7fa3d4;background:#e8f0fa"><svg viewBox="0 0 12 12" style="position:absolute;left:0;top:0;width:12px;height:12px"><path d="M2.500 2.500 L9.500 9.500 M9.500 2.500 L2.500 9.500" stroke="#1d3f7f" stroke-width="1.300"/></svg></div>
<div class="a" style="left:5px;top:23px;width:548px;height:420px;border:1px solid;border-color:#a3bae9 #d3e0f0 #d3e0f0 #a3bae9"></div>
<div class="a" style="left:6px;top:24px;width:546px;height:418px;border:1px solid;border-color:#e4edf8 #9ab6e2 #9ab6e2 #e4edf8"></div>
<div class="a" style="left:7px;top:25px;width:544px;height:416px;border:1px solid #8fb0e0;background:#d6e3f1;box-shadow:inset 0 0 0 1px #f1f6fb"></div>
<div class="a fs" style="left:18px;top:44px;height:227px"></div>
<div class="a" style="left:28px;top:38px;width:0px;height:15px;background:#d6e3f1"></div>
<div class="a" style="left:28px;top:38px;width:104px;height:15px;background:#d6e3f1"></div>
<div class="a tool" style="left:31px;top:38px;height:15px;"><svg viewBox="0 0 13 13" style="position:absolute;left:0;top:0;width:13px;height:13px"><path d="M3 8 L6.500 4 L10 8 Z" fill="#1f4f9a"/></svg></div>
<div class="a leg" style="left:49px;top:39px">Basic Settings</div>
<div class="a fs" style="left:18px;top:288px;height:75px"></div>
<div class="a" style="left:28px;top:282px;width:0px;height:15px;background:#d6e3f1"></div>
<div class="a" style="left:28px;top:282px;width:128px;height:15px;background:#d6e3f1"></div>
<div class="a tool" style="left:31px;top:282px;height:15px;"><svg viewBox="0 0 13 13" style="position:absolute;left:0;top:0;width:13px;height:13px"><path d="M3 8 L6.500 4 L10 8 Z" fill="#1f4f9a"/></svg></div>
<div class="a leg" style="left:49px;top:283px">Advanced Settings</div>
<div class="a" style="left:18px;top:380px;width:522px;height:1px;background:#b5b8c8"></div>
<div class="a" style="left:28px;top:374px;width:0px;height:15px;background:#d6e3f1"></div>
<div class="a" style="left:28px;top:374px;width:105px;height:15px;background:#d6e3f1"></div>
<div class="a tool" style="left:31px;top:374px;height:13px;border-bottom:0;border-radius:3px 3px 0 0;"><svg viewBox="0 0 13 13" style="position:absolute;left:0;top:0;width:13px;height:13px"><path d="M3 5 L6.500 9 L10 5 Z" fill="#1f4f9a"/></svg></div>
<div class="a leg" style="left:49px;top:375px">Read-only Info</div>
<div class="a lbl" style="left:29px;top:65px">Enabled:</div>
<div class="a cb" style="left:235px;top:65px"><svg viewBox="0 0 11 11"><path d="M2.200 5.200 L4.600 8.600 L9 1.800" stroke="#2f4a9c" stroke-width="1.800" fill="none"/></svg></div>
<div class="a lbl" style="left:29px;top:89px">Name:</div>
<div class="a fld" style="left:234px;top:85px;width:300px;letter-spacing:-.2px;">Das Erste</div>
<div class="a lbl" style="left:29px;top:115px">Number:</div>
<div class="a fld" style="left:234px;top:111px;width:300px;">1</div>
<div class="a lbl" style="left:29px;top:141px">User Icon:</div>
<div class="a fld" style="left:234px;top:137px;width:300px;letter-spacing:.45px;">picon://1_0_1_80_A01_2114_EEEE0000_0_0_0.png</div>
<div class="a lbl" style="left:29px;top:167px">Auto EPG Channel:</div>
<div class="a cb" style="left:235px;top:167px"><svg viewBox="0 0 11 11"><path d="M2.200 5.200 L4.600 8.600 L9 1.800" stroke="#2f4a9c" stroke-width="1.800" fill="none"/></svg></div>
<div class="a lbl" style="left:29px;top:191px">EPG Source:</div>
<div class="a fld" style="left:234px;top:187px;width:283px;"></div>
<div class="a trig" style="left:517px;top:187px"><svg viewBox="0 0 10 8"><path d="M1 1.500 L5 5.500 L9 1.500" stroke="#15428b" stroke-width="2.200" fill="none"/></svg></div>
<div class="a lbl" style="left:29px;top:217px">Services:</div>
<div class="a fld" style="left:234px;top:213px;width:283px;">DVBT/682MHz/Das Erste</div>
<div class="a trig" style="left:517px;top:213px"><svg viewBox="0 0 10 8"><path d="M1 1.500 L5 5.500 L9 1.500" stroke="#15428b" stroke-width="2.200" fill="none"/></svg></div>
<div class="a lbl" style="left:29px;top:243px">Tags:</div>
<div class="a fld" style="left:234px;top:239px;width:283px;">SDTV,TV channels</div>
<div class="a trig" style="left:517px;top:239px"><svg viewBox="0 0 10 8"><path d="M1 1.500 L5 5.500 L9 1.500" stroke="#15428b" stroke-width="2.200" fill="none"/></svg></div>
<div class="a lbl" style="left:29px;top:309px">DVR Pre:</div>
<div class="a fld" style="left:234px;top:305px;width:300px;">0</div>
<div class="a lbl" style="left:29px;top:335px">DVR Post:</div>
<div class="a fld" style="left:234px;top:331px;width:300px;">0</div>
<div class="a" style="left:21px;top:410px;width:75px;height:22px;border:1px solid #b8b8b8;border-radius:3px;background:linear-gradient(#ffffff 0%,#f3f3f3 52%,#d9d9d9 56%,#e0e0e0 100%)"></div>
<div class="a" style="left:37px;top:413px;width:16px;height:16px"><svg viewBox="0 0 16 16"><path d="M0.800 0.800 H7.500 L10.500 3.800 V11.500 H0.800 Z" fill="#dbe9f7" stroke="#4d8ccf" stroke-width="1.200"/><rect x="1.800" y="8.500" width="5" height="2" fill="#36a3e0"/><rect x="5.500" y="6" width="10" height="9.500" fill="#4a7cc0" stroke="#3a68a8" stroke-width=".8"/><rect x="7" y="6.500" width="7" height="3.500" fill="#f4f7fb"/><rect x="7.300" y="12" width="6.400" height="3" fill="#e8f2da"/><rect x="8.500" y="12.800" width="4" height="1.600" fill="#4fb04a"/><rect x="7.800" y="7.200" width="1.200" height="1.500" fill="#2a4a88"/></svg></div>
<div class="a" style="left:55px;top:415px;font-size:11px;line-height:13px;color:#333">Save</div>
</div>
<div class="a" id="win"></div>
</body></html>
